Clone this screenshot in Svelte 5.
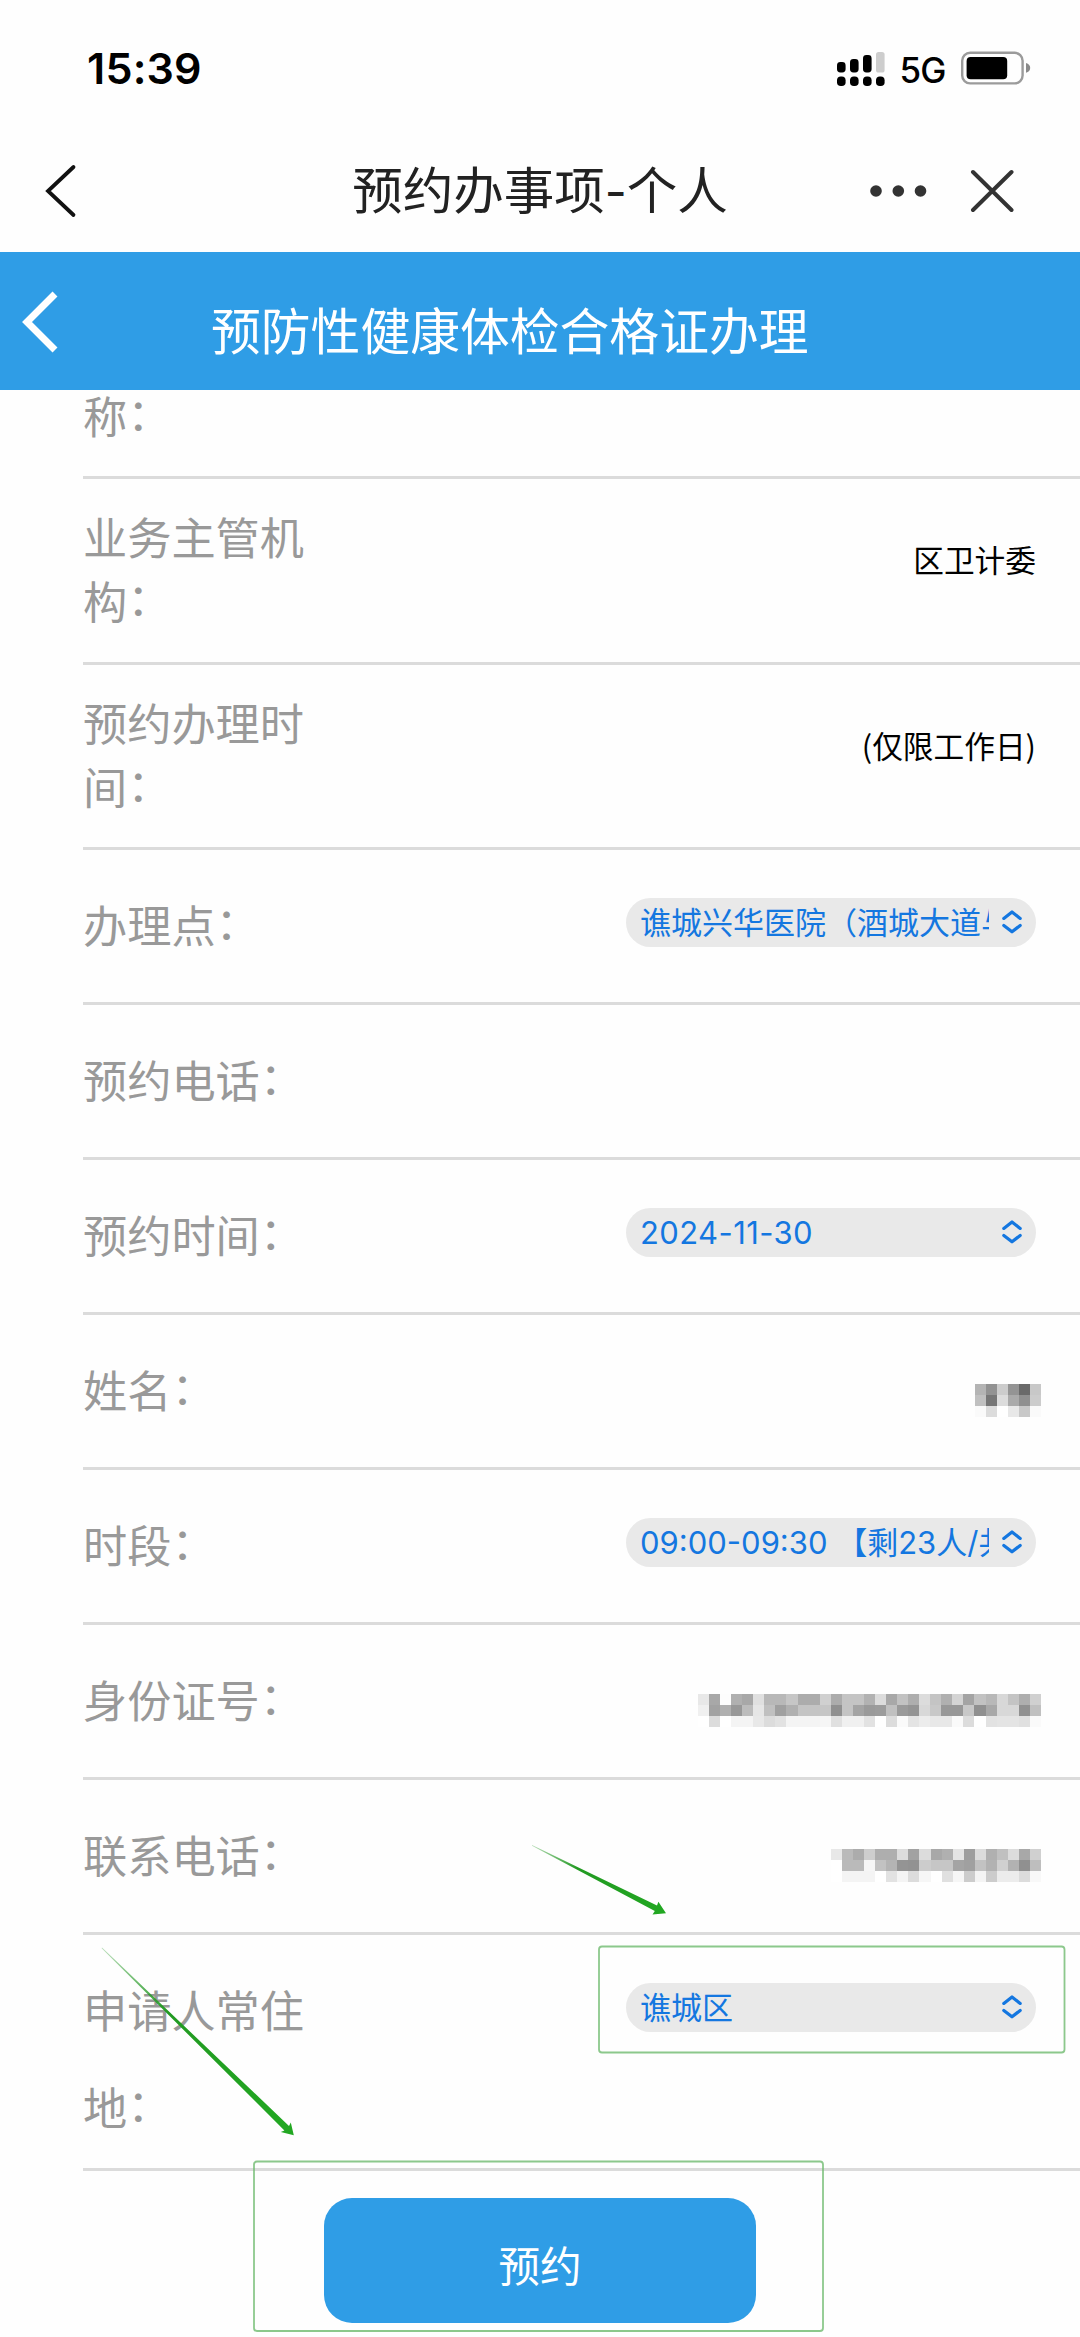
<script>
  const shades = (text) => text.trim().split(/\s+/).map((h) => `#${h}${h}${h}`);

  const nameMask = {
    cols: 6,
    cells: shades(`b4 92 cc 94 6a c8
      c0 76 dc aa 90 cc
      fa dc ff e8 c8 fa`)
  };
  const idMask = {
    cols: 31,
    cells: shades(`e8 a8 fd b0 a8 e0 b8 b8 c6 ac ac d0 ac c4 c4 b2 dc a8 c2 ae dc c4 b0 d4 a4 c2 b8 d8 c4 ae d0
      f0 a2 b0 98 bc e6 c0 a0 b0 c4 c4 c6 90 c4 a4 9a 9c c0 9a 94 d8 c8 98 98 c8 90 a8 d8 d8 90 c0
      ff dc ff f4 f4 e8 dc e2 f4 f4 f4 f6 e0 f0 f0 e2 ff dc fa e4 ec e8 e8 fa dc ff e2 e4 e4 e0 fa`)
  };
  const phoneMask = {
    cols: 19,
    cells: shades(`e8 ba ac ce ae ae dc a2 dc a8 b0 e4 9e dc b0 c0 dc a8 d0
      ff ba ba f6 c2 b4 94 92 cc c6 c6 a4 a0 c2 b2 d0 b2 90 be
      ff f4 f4 f4 ff e2 f4 dc f6 ff e0 f6 cc f4 cc ec ec dc f8`)
  };

  const rows = [
    { label: ['称'], kind: 'partial' },
    { label: ['业务主管机', '构'], kind: 'double', text: '区卫计委' },
    { label: ['预约办理时', '间'], kind: 'double short', text: '(仅限工作日)' },
    { label: ['办理点'], select: '谯城兴华医院（酒城大道与' },
    { label: ['预约电话'] },
    { label: ['预约时间'], select: '2024-11-30', kind: 'date' },
    { label: ['姓名'], mask: nameMask },
    { label: ['时段'], select: '09:00-09:30 【剩23人/共', kind: 'slot' },
    { label: ['身份证号'], mask: idMask },
    { label: ['联系电话'], mask: phoneMask },
    { label: ['申请人常住', '地'], kind: 'last', select: '谯城区' }
  ];
</script>

<div class="screen">
  <div class="status">
    <span class="time">15:39</span>
    <div class="indicators">
      <svg class="signal" width="48" height="36" viewBox="0 0 48 36">
        <rect x="0" y="11" width="8.6" height="10.5" rx="3.4" />
        <rect x="13" y="8" width="8.6" height="13.5" rx="3.4" />
        <rect x="26" y="4" width="8.6" height="17.5" rx="3.4" />
        <rect x="39" y="1" width="8.6" height="20.5" rx="2.6" fill="#cdcdcd" />
        <rect x="0" y="25.5" width="8.6" height="9.5" rx="3.8" />
        <rect x="13" y="25.5" width="8.6" height="9.5" rx="3.8" />
        <rect x="26" y="25.5" width="8.6" height="9.5" rx="3.8" />
        <rect x="39" y="25.5" width="8.6" height="9.5" rx="3.8" />
      </svg>
      <span class="network">5G</span>
      <svg class="battery" width="70" height="34" viewBox="0 0 70 34">
        <rect x="1.2" y="1.8" width="60.4" height="30.6" rx="8" fill="none" stroke="#9b9b9b" stroke-width="2.4" />
        <rect x="5.6" y="6" width="40.6" height="22.2" rx="4" />
        <path d="M65 12 Q69.2 13.4 69.2 16.9 Q69.2 20.4 65 21.8 Z" fill="#8a8a8a" />
      </svg>
    </div>
  </div>

  <div class="nav">
    <svg class="nav-back" width="34" height="56" viewBox="0 0 34 56" fill="none" stroke="#111" stroke-width="3.8" stroke-linecap="round">
      <path d="M30.5 4 L5 28 L30.5 52" />
    </svg>
    <span class="nav-title">预约办事项<span class="dash">-</span>个人</span>
    <svg class="nav-tools" width="146" height="46" viewBox="0 0 146 46" fill="#333">
      <circle cx="8" cy="23" r="5.8" />
      <circle cx="30.3" cy="23" r="5.8" />
      <circle cx="52.5" cy="23" r="5.8" />
      <path d="M105 4 L143.5 42 M143.5 4 L105 42" stroke="#333" stroke-width="4" stroke-linecap="round" />
    </svg>
  </div>

  <div class="banner">
    <svg class="banner-back" width="38" height="64" viewBox="0 0 38 64" fill="none" stroke="#fff" stroke-width="7">
      <path d="M34 4 L6 32 L34 60" />
    </svg>
    <span class="banner-title">预防性健康体检合格证办理</span>
  </div>

  <div class="form">
    {#each rows as row}
      <div class="row {row.kind ?? ''}">
        <div class="label">
          {#each row.label as line, i}
            <div>{line}{#if i === row.label.length - 1}<span class="colon">：</span>{/if}</div>
          {/each}
        </div>
        {#if row.text}
          <div class="value">{row.text}</div>
        {:else if row.select}
          <div class="select">
            <span>{row.select}</span>
            <svg width="22" height="26" viewBox="0 0 22 26" fill="none" stroke="#1477e0" stroke-width="3.2" stroke-linecap="round" stroke-linejoin="round">
              <path d="M2.8 9.4 L11 3 L19.2 9.4 M2.8 16.4 L11 22.8 L19.2 16.4" />
            </svg>
          </div>
        {:else if row.mask}
          <svg class="mask" width={row.mask.cols * 11.06} height="33.3" viewBox="0 0 {row.mask.cols} 3" preserveAspectRatio="none" shape-rendering="crispEdges">
            {#each row.mask.cells as fill, i}
              <rect x={i % row.mask.cols} y={Math.floor(i / row.mask.cols)} width="1" height="1" {fill} />
            {/each}
          </svg>
        {/if}
      </div>
    {/each}
  </div>

  <div class="actions">
    <button>预约</button>
  </div>

  <svg class="notes" width="1080" height="2337" viewBox="0 0 1080 2337">
    <defs>
      <linearGradient id="fadeA" gradientUnits="userSpaceOnUse" x1="530" y1="1845" x2="665" y2="1913">
        <stop offset="0" stop-color="#2a9a2a" stop-opacity="0.3" />
        <stop offset="0.35" stop-color="#229a22" />
        <stop offset="1" stop-color="#22a822" />
      </linearGradient>
      <linearGradient id="fadeB" gradientUnits="userSpaceOnUse" x1="101" y1="1947" x2="293" y2="2135">
        <stop offset="0" stop-color="#2a9a2a" stop-opacity="0.3" />
        <stop offset="0.35" stop-color="#229a22" />
        <stop offset="1" stop-color="#22a822" />
      </linearGradient>
    </defs>
    <rect x="599" y="1946.5" width="465.5" height="106" rx="3" />
    <rect x="254" y="2161.5" width="569" height="169.5" rx="3" />
    <path fill="url(#fadeA)" d="M532 1845 L657 1905.5 L658.4 1901.8 L666 1913.2 L652.5 1914.4 L654.8 1911 L532 1845.8 Z" />
    <path fill="url(#fadeB)" d="M102 1947.6 L289 2126 L290.8 2122.4 L293.8 2135.2 L280.8 2132 L284.4 2130.4 L101.6 1948.2 Z" />
  </svg>
</div>

<style>
  :global(body) {
    margin: 0;
    background: #fff;
  }
  .screen {
    position: relative;
    width: 1080px;
    height: 2337px;
    overflow: hidden;
    background: #fefefe;
    font-family: Inter, 'Noto Sans CJK SC', sans-serif;
    box-sizing: border-box;
  }
  .status {
    display: flex;
    justify-content: space-between;
    height: 138px;
    padding: 0 49.5px 0 87px;
    box-sizing: border-box;
  }
  .time {
    font-size: 43px;
    font-weight: 600;
    line-height: 137px;
    letter-spacing: 0.2px;
    color: #000;
  }
  .indicators {
    display: flex;
    align-items: flex-start;
    padding-top: 51px;
  }
  .network {
    width: 60px;
    margin-left: 14.5px;
    font-size: 35px;
    font-weight: 500;
    line-height: 38px;
    letter-spacing: -1px;
    color: #000;
  }
  .battery {
    margin-left: 1px;
  }
  .nav {
    display: grid;
    grid-template-columns: 300px 480px 300px;
    align-items: center;
    height: 106px;
    padding-bottom: 8px;
  }
  .nav-back {
    margin-left: 43px;
  }
  .nav-title {
    margin-top: -3px;
    font-family: 'Noto Sans CJK SC', sans-serif;
    font-size: 50.5px;
    line-height: 60px;
    text-align: center;
    white-space: nowrap;
    color: #222;
  }
  .dash {
    font-family: Inter, sans-serif;
    font-size: 48px;
  }
  .nav-tools {
    margin-left: 87.5px;
  }
  .banner {
    display: flex;
    align-items: center;
    height: 138px;
    background: #2f9de6;
    color: #fff;
  }
  .banner-back {
    margin: 2px 0 0 21px;
  }
  .banner-title {
    margin: 14px 0 0 152px;
    font-family: 'Noto Sans CJK SC', sans-serif;
    font-size: 49.8px;
    line-height: 60px;
    white-space: nowrap;
  }
  .form {
    margin-left: 83px;
  }
  .row {
    display: flex;
    justify-content: space-between;
    align-items: flex-start;
    height: 155px;
    padding-right: 44px;
    border-bottom: 3px solid #dbdbdb;
    box-sizing: border-box;
  }
  .label {
    padding-top: 41.5px;
    font-family: 'Noto Sans CJK SC', sans-serif;
    font-size: 44.2px;
    line-height: 64px;
    white-space: nowrap;
    color: #999;
  }
  .colon {
    display: inline-block;
    line-height: 1;
    transform: translateY(-3px);
  }
  .partial {
    height: 89px;
  }
  .partial .label {
    padding-top: 0;
    margin-top: -7.5px;
  }
  .double {
    height: 186px;
  }
  .double .label {
    padding-top: 25px;
  }
  .short {
    height: 185px;
  }
  .last {
    height: 236px;
  }
  .last .label {
    padding-top: 26px;
    line-height: 96.7px;
  }
  .value {
    padding-top: 58px;
    font-family: 'Noto Sans CJK SC', sans-serif;
    font-size: 30.7px;
    line-height: 44px;
    color: #000;
  }
  .select {
    display: flex;
    align-items: center;
    width: 410px;
    height: 49px;
    margin-top: 47.5px;
    padding: 0 13px 0 14px;
    border-radius: 25px;
    background: #e9e9e9;
    box-sizing: border-box;
    color: #1477e0;
    font-size: 31px;
    line-height: 49px;
  }
  .select span {
    width: 349px;
    margin-top: -4px;
    overflow: hidden;
    white-space: pre;
    font-family: 'Noto Sans CJK SC', sans-serif;
  }
  .date .select span,
  .slot .select span {
    margin-top: 0;
    font-family: Inter, 'Noto Sans CJK SC', sans-serif;
  }
  .date .select span {
    letter-spacing: 0.4px;
  }
  .select svg {
    flex: none;
    margin-left: 12px;
  }
  .mask {
    margin-top: 69.3px;
    margin-right: -5px;
  }
  .actions {
    display: flex;
    justify-content: center;
    padding-top: 27px;
  }
  button {
    width: 432px;
    height: 125px;
    padding: 7px 0 0;
    border: 0;
    border-radius: 28px;
    background: #2f9de6;
    color: #fff;
    font-family: 'Noto Sans CJK SC', sans-serif;
    font-size: 41.5px;
    line-height: 60px;
  }
  .notes {
    position: absolute;
    left: 0;
    top: 0;
    pointer-events: none;
  }
  .notes rect {
    fill: none;
    stroke: #6fba6f;
    stroke-opacity: 0.8;
    stroke-width: 1.8;
  }
</style>
